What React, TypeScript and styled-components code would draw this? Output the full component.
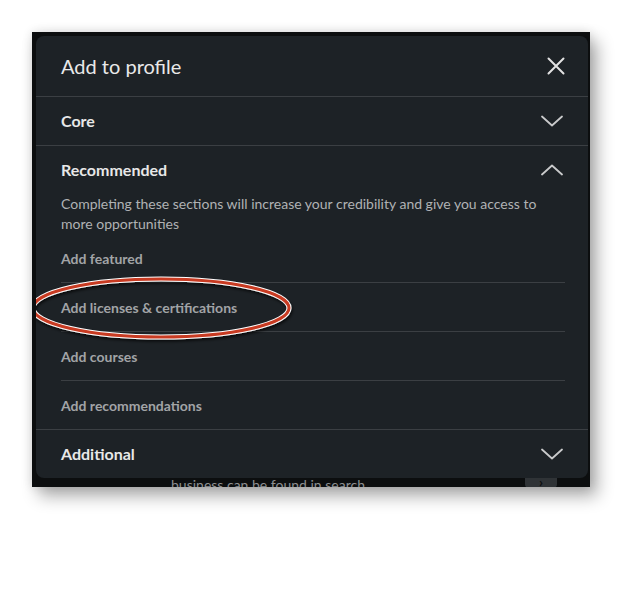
import React from "react";
import styled, { createGlobalStyle } from "styled-components";

const Global = createGlobalStyle`
  html, body { margin: 0; padding: 0; background: #ffffff; }
  body { font-family: "Lato", "Open Sans", sans-serif; }
  * { box-sizing: border-box; }
`;

const Page = styled.div`
  width: 622px;
  height: 599px;
  padding: 32px 0 0 32px;
  background: #ffffff;
`;

const Shot = styled.div`
  position: relative;
  width: 558px;
  height: 455px;
  background: #0c0e0f;
  padding: 4px 2px 0 4px;
  display: flex;
  flex-direction: column;
  box-shadow: 7px 9px 16px rgba(0, 0, 0, 0.33), 0 0 10px rgba(0, 0, 0, 0.12);
`;

const Modal = styled.div`
  width: 552px;
  height: 442px;
  background: #1d2226;
  border-radius: 8px;
  display: flex;
  flex-direction: column;
  overflow: hidden;
  color: #e6e6e6;
`;

const Header = styled.div`
  height: 61px;
  flex: none;
  display: flex;
  align-items: center;
  justify-content: space-between;
  padding: 0 22px 0 25px;
  border-bottom: 1px solid #3b3f43;
`;

const Title = styled.h2`
  margin: 0;
  font-size: 20px;
  font-weight: 400;
  color: #e9e9e9;
`;

const IconButton = styled.button`
  background: none;
  border: 0;
  padding: 0;
  width: 20px;
  height: 20px;
  display: flex;
  align-items: center;
  justify-content: center;
  color: #e2e2e2;
`;

const SectionHead = styled.div<{ $divider?: boolean }>`
  height: ${(p) => (p.$divider ? 49 : 48)}px;
  flex: none;
  display: flex;
  align-items: center;
  justify-content: space-between;
  padding: 0 25px 0 25px;
  border-bottom: ${(p) => (p.$divider ? "1px solid #3b3f43" : "0")};
`;

const SectionTitle = styled.span`
  font-size: 16px;
  font-weight: 700;
  color: #e8e8e8;
  padding-bottom: 2px;
`;

const Desc = styled.p`
  margin: 0;
  padding: 0 40px 0 25px;
  font-size: 14px;
  line-height: 20px;
  color: #b0b2b4;
`;

const ItemList = styled.div`
  padding: 0 23px 0 25px;
  border-bottom: 1px solid #3b3f43;
  display: flex;
  flex-direction: column;
`;

const Item = styled.div<{ $last?: boolean }>`
  position: relative;
  height: ${(p) => (p.$last ? 48 : 49)}px;
  display: flex;
  align-items: center;
  font-size: 14px;
  font-weight: 700;
  color: #a2a4a6;
  border-bottom: ${(p) => (p.$last ? "0" : "1px solid #3b3f43")};
`;

const Peek = styled.div`
  height: 9px;
  overflow: hidden;
  display: flex;
  align-items: flex-start;
  justify-content: space-between;
  padding: 0 31px 0 135px;
`;

const PeekText = styled.span`
  font-size: 14px;
  line-height: 14px;
  color: #8d8f91;
`;

const PeekButton = styled.div`
  width: 32px;
  height: 20px;
  background: #2f3336;
  border-radius: 4px;
  margin-top: -10px;
  display: flex;
  align-items: flex-end;
  justify-content: center;
  color: #0c0e0f;
  font-size: 14px;
  font-weight: 700;
  line-height: 12px;
`;

const Ellipse = styled.svg`
  position: absolute;
  left: -30px;
  top: -6px;
  pointer-events: none;
  overflow: visible;
`;

const Chevron = ({ up }: { up?: boolean }) => (
  <svg width="22" height="12" viewBox="0 0 22 12" fill="none">
    <path
      d={up ? "M1 10.5 L11 1.5 L21 10.5" : "M1 1.5 L11 10.5 L21 1.5"}
      stroke="#c9cacb"
      strokeWidth="1.8"
      strokeLinecap="round"
      strokeLinejoin="round"
    />
  </svg>
);

const CloseIcon = () => (
  <svg width="18" height="18" viewBox="0 0 18 18" fill="none">
    <path d="M1.5 1.5 L16.5 16.5 M16.5 1.5 L1.5 16.5" stroke="#e2e2e2" strokeWidth="2" strokeLinecap="round" />
  </svg>
);

const RedRing = () => (
  <Ellipse width="262" height="64" viewBox="0 0 262 64">
    <defs>
      <filter id="sh" x="-10%" y="-30%" width="120%" height="160%">
        <feDropShadow dx="1" dy="2" stdDeviation="1.5" floodColor="#000" floodOpacity="0.7" />
      </filter>
    </defs>
    <g filter="url(#sh)">
      <ellipse cx="130" cy="31" rx="128" ry="29" stroke="#ffffff" strokeWidth="5" fill="none" />
      <ellipse cx="130" cy="31" rx="128" ry="29" stroke="#c83a22" strokeWidth="3" fill="none" />
    </g>
  </Ellipse>
);

export default function App() {
  return (
    <>
      <Global />
      <Page>
        <Shot>
          <Modal>
            <Header>
              <Title>Add to profile</Title>
              <IconButton aria-label="Close">
                <CloseIcon />
              </IconButton>
            </Header>
            <SectionHead $divider>
              <SectionTitle>Core</SectionTitle>
              <Chevron />
            </SectionHead>
            <SectionHead>
              <SectionTitle>Recommended</SectionTitle>
              <Chevron up />
            </SectionHead>
            <Desc>
              Completing these sections will increase your credibility and give you access to more opportunities
            </Desc>
            <ItemList>
              <Item>Add featured</Item>
              <Item>
                <RedRing />
                Add licenses &amp; certifications
              </Item>
              <Item>Add courses</Item>
              <Item $last>Add recommendations</Item>
            </ItemList>
            <SectionHead>
              <SectionTitle>Additional</SectionTitle>
              <Chevron />
            </SectionHead>
          </Modal>
          <Peek>
            <PeekText>business can be found in search</PeekText>
            <PeekButton>›</PeekButton>
          </Peek>
        </Shot>
      </Page>
    </>
  );
}
